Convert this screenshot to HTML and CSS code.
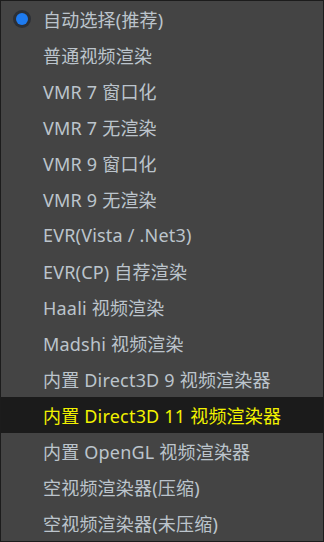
FILE: index.html
```html
<!DOCTYPE html>
<html lang="zh">
<head>
<meta charset="UTF-8">
<title>视频渲染器</title>
<link rel="stylesheet" href="styles.css">
</head>
<body>
<ul class="menu">
  <li class="item checked"><span class="radio"></span>自动选择(推荐)</li>
  <li class="item">普通视频渲染</li>
  <li class="item">VMR 7 窗口化</li>
  <li class="item">VMR 7 无渲染</li>
  <li class="item">VMR 9 窗口化</li>
  <li class="item">VMR 9 无渲染</li>
  <li class="item">EVR(Vista / .Net3)</li>
  <li class="item">EVR(CP) 自荐渲染</li>
  <li class="item">Haali 视频渲染</li>
  <li class="item">Madshi 视频渲染</li>
  <li class="item">内置 Direct3D 9 视频渲染器</li>
  <li class="item active">内置 Direct3D 11 视频渲染器</li>
  <li class="item">内置 OpenGL 视频渲染器</li>
  <li class="item">空视频渲染器(压缩)</li>
  <li class="item">空视频渲染器(未压缩)</li>
</ul>
</body>
</html>
```
FILE: styles.css
```css
* {
margin: 0;
padding: 0;
box-sizing: border-box;
}
body {
background: #444444;
font-family: "Noto Sans", "Noto Sans CJK SC", sans-serif;
}
.menu {
list-style: none;
width: 324px;
height: 542px;
border: 1px solid #1c1c1c;
background: #444444;
}
.item {
display: flex;
align-items: center;
height: 36px;
padding-left: 42px;
font-size: 18px;
letter-spacing: 0.2px;
color: #bcc4cc;
position: relative;
white-space: nowrap;
}
.item.active {
background: #1b1b1b;
color: #f2f200;
}
.radio {
position: absolute;
left: 12px;
top: 9px;
width: 18px;
height: 18px;
border-radius: 50%;
background: #2b2f36;
display: flex;
align-items: center;
justify-content: center;
}
.radio::after {
content: "";
width: 12px;
height: 12px;
border-radius: 50%;
background: #1e7bf0;
}
```
